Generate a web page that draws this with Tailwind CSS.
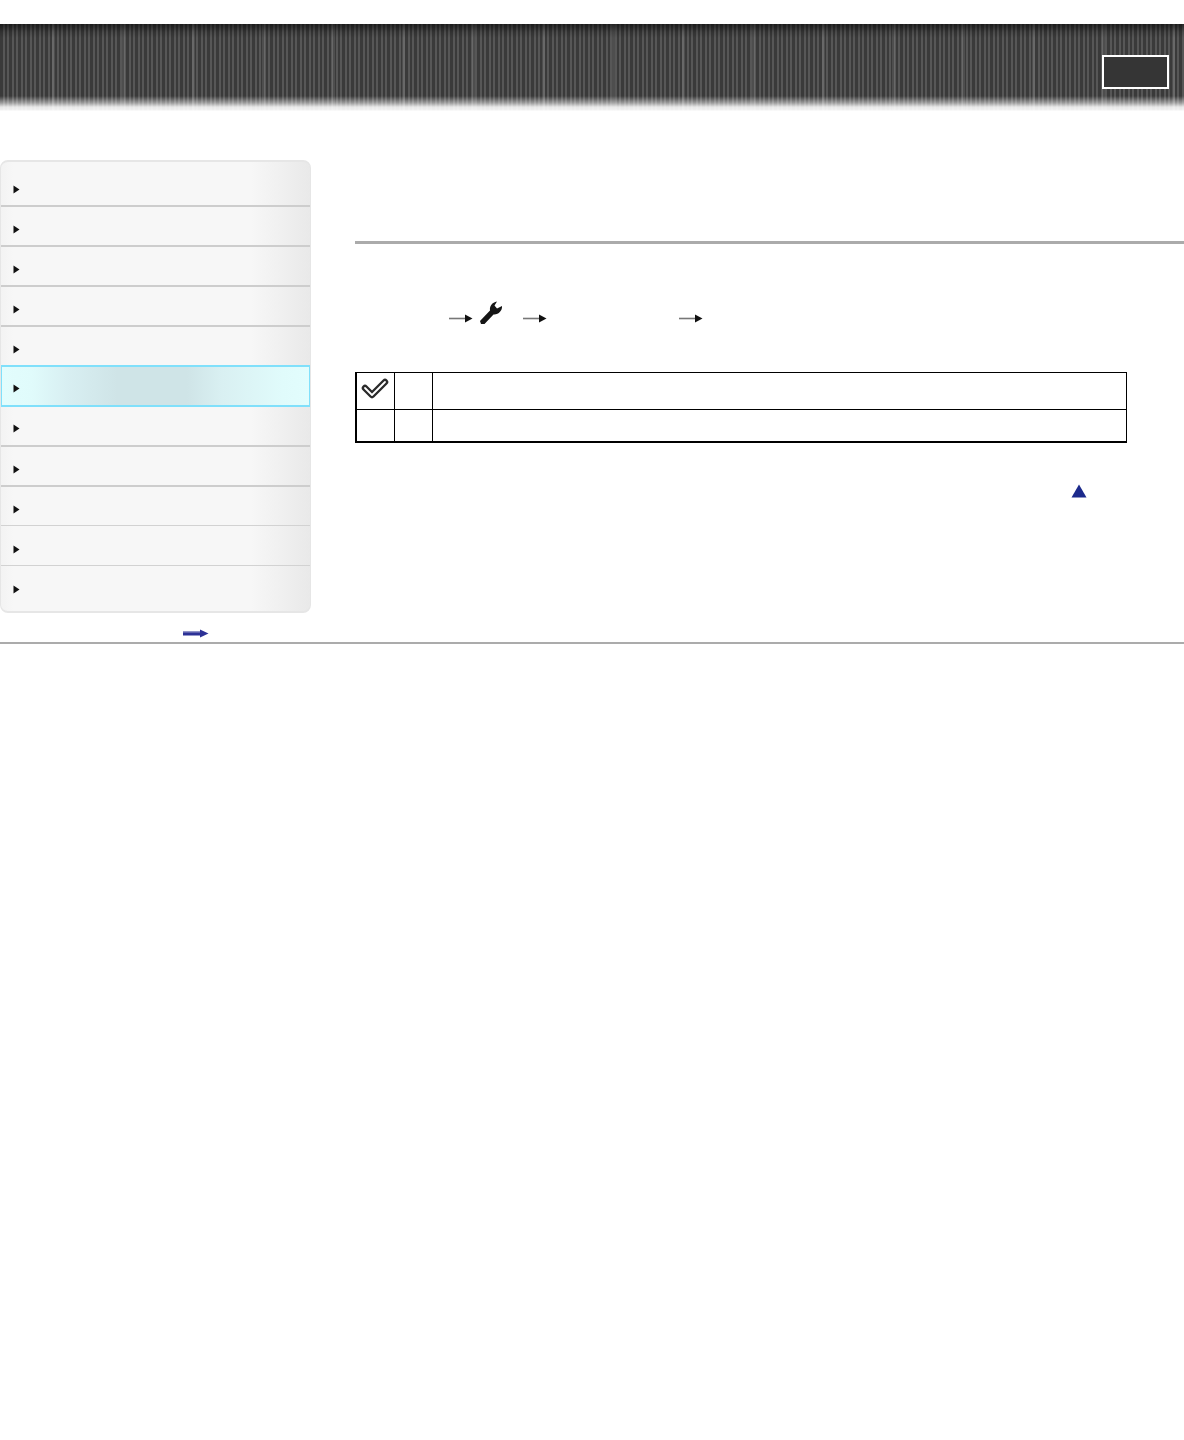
<!DOCTYPE html>
<html lang="en">
<head>
    <meta charset="UTF-8">
    <meta name="viewport" content="width=device-width, initial-scale=1.0">
    <title>Help Guide</title>
    <script src="https://cdn.jsdelivr.net/npm/@tailwindcss/browser@4"></script>
</head>
<body class="bg-white min-h-[1440px] font-['Liberation_Sans',sans-serif]">

    <!-- Header band -->
    <header class="mt-6 h-[87px] flex justify-end items-start pr-[15px] pt-[31px] bg-[linear-gradient(180deg,rgba(0,0,0,0.55)_0,rgba(0,0,0,0.15)_8px,rgba(0,0,0,0)_14px,rgba(255,255,255,0)_72px,rgba(255,255,255,0.5)_79px,rgba(255,255,255,0.88)_83px,rgba(255,255,255,0.93)_86px,#fff_87px),repeating-linear-gradient(90deg,transparent_0,transparent_52px,rgba(255,255,255,0.1)_52px,rgba(255,255,255,0.1)_55px,transparent_55px,transparent_70px),repeating-linear-gradient(90deg,#3a3a3a_0,#3a3a3a_3px,#575757_3px,#575757_5px,#3a3a3a_5px,#3a3a3a_7px,#575757_7px,#575757_9px)]">
        <div class="w-[67px] h-[34px] border-2 border-white bg-[#353535]"></div>
    </header>

    <div class="flex mt-[49px] items-start">
        <!-- Sidebar -->
        <div class="w-[311px] shrink-0">
            <nav class="h-[453px] rounded-[8px] border-t-2 border-b-2 border-r border-l border-[#e6e6e6] overflow-hidden flex flex-col bg-[linear-gradient(90deg,#f3f3f3_0,#f7f7f7_12px,#f7f7f7_250px,#e9e9e9_100%)]">
                <div class="h-[45px] shrink-0 border-b-2 border-[#cdcdcd] flex items-center pl-[12px] pt-[12px]"><svg class="w-[7px] h-[9px]" viewBox="0 0 7 9"><path d="M0.5 0.5 L6.5 4.5 L0.5 8.5 Z" fill="#111"/></svg></div>
                <div class="h-[40px] shrink-0 border-b-2 border-[#cdcdcd] flex items-center pl-[12px] pt-[6px]"><svg class="w-[7px] h-[9px]" viewBox="0 0 7 9"><path d="M0.5 0.5 L6.5 4.5 L0.5 8.5 Z" fill="#111"/></svg></div>
                <div class="h-[40px] shrink-0 border-b-2 border-[#cdcdcd] flex items-center pl-[12px] pt-[6px]"><svg class="w-[7px] h-[9px]" viewBox="0 0 7 9"><path d="M0.5 0.5 L6.5 4.5 L0.5 8.5 Z" fill="#111"/></svg></div>
                <div class="h-[40px] shrink-0 border-b-2 border-[#cdcdcd] flex items-center pl-[12px] pt-[6px]"><svg class="w-[7px] h-[9px]" viewBox="0 0 7 9"><path d="M0.5 0.5 L6.5 4.5 L0.5 8.5 Z" fill="#111"/></svg></div>
                <div class="h-[38px] shrink-0 flex items-center pl-[12px] pt-[7px]"><svg class="w-[7px] h-[9px]" viewBox="0 0 7 9"><path d="M0.5 0.5 L6.5 4.5 L0.5 8.5 Z" fill="#111"/></svg></div>
                <!-- Active row -->
                <div class="h-[42px] shrink-0 -mx-px border-2 border-[#80e0fb] flex items-center pl-[11px] pt-[5px] bg-[linear-gradient(90deg,#e2fdfd_0,#e0fbfb_30px,#d8eff2_65px,#cfe4e7_115px,#cfe4e7_185px,#d9f0f2_220px,#e0fbfb_280px,#e2fdfd_100%)]"><svg class="w-[7px] h-[9px]" viewBox="0 0 7 9"><path d="M0.5 0.5 L6.5 4.5 L0.5 8.5 Z" fill="#111"/></svg></div>
                <div class="h-[40px] shrink-0 border-b-2 border-[#cdcdcd] flex items-center pl-[12px] pt-[4px]"><svg class="w-[7px] h-[9px]" viewBox="0 0 7 9"><path d="M0.5 0.5 L6.5 4.5 L0.5 8.5 Z" fill="#111"/></svg></div>
                <div class="h-[40px] shrink-0 border-b-2 border-[#cdcdcd] flex items-center pl-[12px] pt-[6px]"><svg class="w-[7px] h-[9px]" viewBox="0 0 7 9"><path d="M0.5 0.5 L6.5 4.5 L0.5 8.5 Z" fill="#111"/></svg></div>
                <div class="h-[39px] shrink-0 border-b border-[#d2d2d2] flex items-center pl-[12px] pt-[7px]"><svg class="w-[7px] h-[9px]" viewBox="0 0 7 9"><path d="M0.5 0.5 L6.5 4.5 L0.5 8.5 Z" fill="#111"/></svg></div>
                <div class="h-[40px] shrink-0 border-b border-[#d2d2d2] flex items-center pl-[12px] pt-[7px]"><svg class="w-[7px] h-[9px]" viewBox="0 0 7 9"><path d="M0.5 0.5 L6.5 4.5 L0.5 8.5 Z" fill="#111"/></svg></div>
                <div class="flex-1 flex items-center pl-[12px] pt-[2px]"><svg class="w-[7px] h-[9px]" viewBox="0 0 7 9"><path d="M0.5 0.5 L6.5 4.5 L0.5 8.5 Z" fill="#111"/></svg></div>
            </nav>
            <div class="h-[29px] pl-[183px] pt-[16px]">
                <svg class="w-[26px] h-[9px] block" viewBox="0 0 26 9"><path d="M0 2.5 H17 V0.5 L25.5 4.5 L17 8.5 V6.5 H0 Z" fill="#2c3196"/><path d="M0 3 H17" stroke="#8f93c8" stroke-width="1"/></svg>
            </div>
        </div>

        <!-- Main content -->
        <main class="flex-1 ml-[44px] min-w-0">
            <div class="h-[81px] border-b-[3px] border-[#ababab] box-content"></div>

            <div class="mt-[58px] h-[32px] pl-[94px] flex items-center">
                <svg class="w-[24px] h-[9px] shrink-0" viewBox="0 0 24 9"><path d="M0 4.5 H17" stroke="#777" stroke-width="1.6"/><path d="M16 0.5 L23.5 4.5 L16 8.5 Z" fill="#111"/></svg>
                <svg class="w-[24px] h-[24px] ml-[6px] mb-[11px] shrink-0 blur-[0.4px]" viewBox="0 0 24 24"><path d="M1 20 L11 9.5 C10.5 5 13 1.5 18 0.5 L15.5 4.5 L18 7.5 L23 5 C23.5 9.5 19.5 14 14.5 13.5 L5.5 23 L2 23 Z" fill="#151515"/></svg>
                <svg class="w-[24px] h-[9px] ml-[20px] shrink-0" viewBox="0 0 24 9"><path d="M0 4.5 H17" stroke="#777" stroke-width="1.6"/><path d="M16 0.5 L23.5 4.5 L16 8.5 Z" fill="#111"/></svg>
                <svg class="w-[24px] h-[9px] ml-[132px] shrink-0" viewBox="0 0 24 9"><path d="M0 4.5 H17" stroke="#777" stroke-width="1.6"/><path d="M16 0.5 L23.5 4.5 L16 8.5 Z" fill="#111"/></svg>
            </div>

            <table class="mt-[38px] w-[772px] border-collapse table-fixed border-t border-l-2 border-r border-b-2 border-black">
                <tbody>
                    <tr class="h-[37px] border-b border-black">
                        <td class="w-[38px] border-r border-black p-0 align-top">
                            <svg class="w-[28px] h-[24px] ml-[4px] mt-[3px] block blur-[0.4px]" viewBox="0 0 28 24"><path d="M4 12 L11 19 L24 6" fill="none" stroke="#2a2a2a" stroke-width="6.5" stroke-linejoin="round" stroke-linecap="round"/><path d="M4 12 L11 19 L24 6" fill="none" stroke="#fff" stroke-width="1.8" stroke-linejoin="round" stroke-linecap="round"/></svg>
                        </td>
                        <td class="w-[38px] border-r border-black p-0"></td>
                        <td class="p-0"></td>
                    </tr>
                    <tr class="h-[32px]">
                        <td class="border-r border-black p-0"></td>
                        <td class="border-r border-black p-0"></td>
                        <td class="p-0"></td>
                    </tr>
                </tbody>
            </table>

            <div class="mt-[41px] pl-[716px]">
                <svg class="w-[16px] h-[14px] block" viewBox="0 0 16 14"><path d="M8 0.5 L15.5 13.5 H0.5 Z" fill="#1c2a8c"/></svg>
            </div>
        </main>
    </div>

    <div class="h-[2px] bg-[#ababab]"></div>
</body>
</html>
